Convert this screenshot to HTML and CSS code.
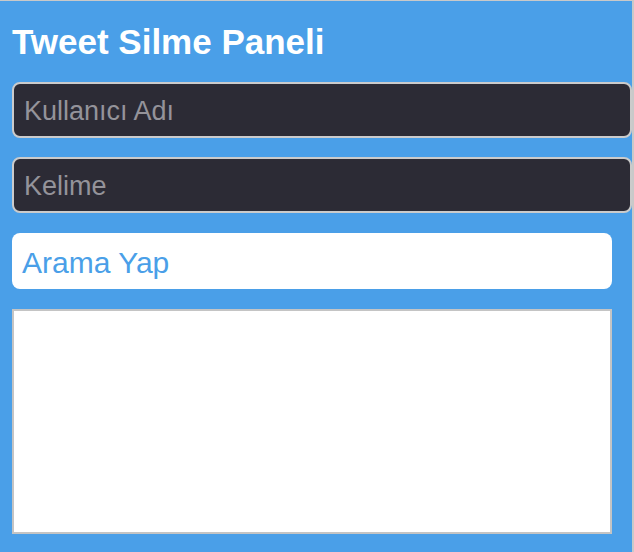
FILE: index.html
```html
<!DOCTYPE html>
<html lang="tr">
<head>
<meta charset="utf-8">
<title>Tweet Silme Paneli</title>
<link rel="stylesheet" href="styles.css">
</head>
<body>
<div class="panel">
  <h1 class="title">Tweet Silme Paneli</h1>
  <input class="field field-user" type="text" placeholder="Kullanıcı Adı">
  <input class="field field-word" type="text" placeholder="Kelime">
  <button class="search-btn" type="button">Arama Yap</button>
  <textarea class="results"></textarea>
</div>
</body>
</html>
```

FILE: styles.css
```css
html, body {
  margin: 0;
  padding: 0;
  background: #4a9fe8;
}

.panel {
  box-sizing: border-box;
  width: 634px;
  height: 552px;
  background: #4a9fe8;
  border-top: 1px solid #c9c9c9;
  border-right: 2px solid #c9c9c9;
  padding: 21px 0 0 12px;
  display: flex;
  flex-direction: column;
  align-items: flex-start;
  overflow: hidden;
  font-family: "Liberation Sans", Arial, Helvetica, sans-serif;
}

.title {
  margin: 0 0 20px 0;
  font-size: 35px;
  line-height: 40px;
  font-weight: bold;
  color: #ffffff;
}

.field {
  box-sizing: border-box;
  width: 620px;
  height: 56px;
  margin: 0;
  padding: 2px 10px 0 10px;
  background: #2c2b35;
  border: 2px solid #cbcbcb;
  border-radius: 8px;
  color: #e0e0e0;
  font-family: "Liberation Sans", Arial, Helvetica, sans-serif;
  font-size: 27px;
  outline: none;
}

.field::placeholder {
  color: #94939a;
  opacity: 1;
}

.field-user {
  margin-bottom: 19px;
}

.field-word {
  margin-bottom: 20px;
}

.search-btn {
  box-sizing: border-box;
  width: 600px;
  height: 56px;
  margin: 0 0 20px 0;
  padding: 3px 10px 0 10px;
  background: #ffffff;
  border: none;
  border-radius: 8px;
  color: #4a9fe8;
  font-family: "Liberation Sans", Arial, Helvetica, sans-serif;
  font-size: 30px;
  text-align: left;
  cursor: pointer;
}

.results {
  box-sizing: border-box;
  width: 600px;
  height: 225px;
  margin: 0;
  background: #ffffff;
  border: 2px solid #c4c4c4;
  border-radius: 0;
  resize: none;
  outline: none;
}
```
